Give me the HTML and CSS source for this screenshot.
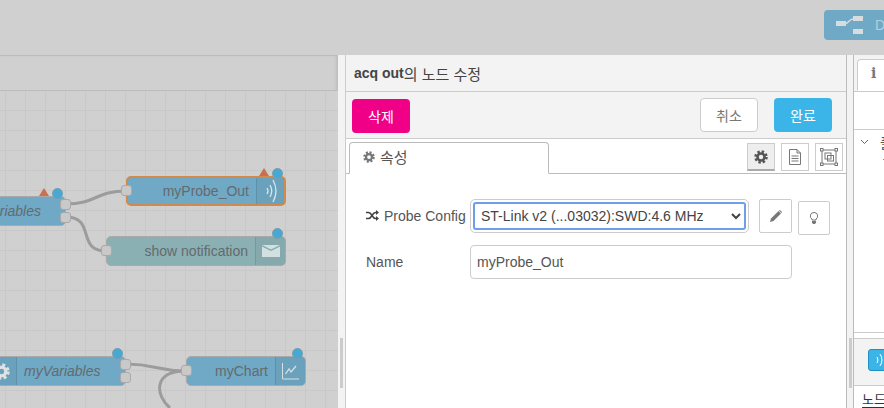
FILE: index.html
```html
<!DOCTYPE html>
<html lang="ko">

<head>
    <meta charset="UTF-8">
    <meta name="viewport" content="width=device-width, initial-scale=1.0">
    <title>acq out</title>
    <link rel="stylesheet" href="styles.css">
</head>

<body>
    <svg class="defs" width="0" height="0">
        <symbol id="cog" viewBox="0 0 16 16">
            <circle cx="8" cy="8" r="6" fill="none" stroke="currentColor" stroke-width="3.4" stroke-dasharray="2.6 2.11"/>
            <circle cx="8" cy="8" r="4" fill="none" stroke="currentColor" stroke-width="3"/>
        </symbol>
    </svg>

    <header class="topbar">
        <div class="deploy">
            <svg class="deploy-icon" width="28" height="18" viewBox="0 0 28 18">
                <path d="M10 7.500C14 7.500 14 3 18 3" fill="none" stroke="#d8dcde" stroke-width="1.500"/>
                <rect x="1" y="5" width="10" height="5" fill="#d8dcde"/>
                <rect x="18" y="0" width="10" height="5" fill="#d8dcde"/>
                <rect x="18" y="13" width="10" height="5" fill="#d8dcde"/>
            </svg>
            <span class="deploy-text">Deploy</span>
        </div>
    </header>

    <div class="main">
        <section class="workspace">
            <div class="ws-tabs"></div>
            <div class="canvas">
                <svg class="wires" width="338" height="318" viewBox="0 91 338 318">
                    <g fill="none" stroke="#9c9c9c" stroke-width="3">
                        <path d="M66 204C96 204 96 191 126 191"/>
                        <path d="M66 217C96 217 76 251 106 251"/>
                        <path d="M126 364C156 364 156 371 186 371"/>
                        <path d="M186 371C153 371 155 395 170 408"/>
                    </g>
                </svg>

                <div class="node node-sel probe-out">
                    <span class="port port-in"></span>
                    <span class="node-label">myProbe_Out</span>
                    <span class="node-icon node-icon-r">
                        <svg width="14" height="24" viewBox="0 0 14 24">
                            <g fill="none" stroke="#dfe3e5" stroke-width="1.300">
                                <path d="M3 9Q5 12 3 15"/>
                                <path d="M6 6Q9.500 12 6 18"/>
                                <path d="M9 1Q15 12 9 23"/>
                            </g>
                        </svg>
                    </span>
                    <span class="warn"></span>
                    <span class="dot"></span>
                </div>

                <div class="node vars-top">
                    <span class="node-label node-italic">myVariables</span>
                    <span class="port port-out port-a"></span>
                    <span class="port port-out port-b"></span>
                    <span class="warn"></span>
                    <span class="dot"></span>
                </div>

                <div class="node node-green notify">
                    <span class="port port-in"></span>
                    <span class="node-label">show notification</span>
                    <span class="node-icon node-icon-r">
                        <svg width="18" height="12" viewBox="0 0 18 12">
                            <path d="M0 0H18L9 4.500Z" fill="#d3e0e1"/>
                            <path d="M0 1.500L9 6L18 1.500V12H0Z" fill="#d3e0e1"/>
                        </svg>
                    </span>
                    <span class="dot"></span>
                </div>

                <div class="node vars-bottom">
                    <span class="node-icon node-icon-l"><svg class="cog-light" width="17" height="17"><use href="#cog"/></svg></span>
                    <span class="node-label node-italic">myVariables</span>
                    <span class="port port-out port-a"></span>
                    <span class="port port-out port-b"></span>
                    <span class="dot"></span>
                </div>

                <div class="node chart">
                    <span class="port port-in"></span>
                    <span class="node-label">myChart</span>
                    <span class="node-icon node-icon-r">
                        <svg width="18" height="17" viewBox="0 0 18 17">
                            <path d="M.5 0V16H17" fill="none" stroke="#d8dfe3"/>
                            <path d="M3.500 11L7 6L9 9L14 3" fill="none" stroke="#d8dfe3" stroke-width="1.300"/>
                        </svg>
                    </span>
                    <span class="dot"></span>
                </div>
            </div>
        </section>

        <div class="splitter"><span class="handle"></span></div>

        <section class="tray">
            <div class="tray-title"><b>acq out</b><span class="title-ko">의 노드 수정</span></div>
            <div class="tray-toolbar">
                <button class="btn btn-delete">삭제</button>
                <div class="tray-actions">
                    <button class="btn btn-cancel">취소</button>
                    <button class="btn btn-done">완료</button>
                </div>
            </div>
            <div class="tray-tabs">
                <div class="tab"><svg class="tab-cog" width="12" height="12"><use href="#cog"/></svg><span class="tab-text">속성</span></div>
                <div class="tab-buttons">
                    <span class="tab-btn tab-btn-on"><svg class="cog-dark" width="14" height="14"><use href="#cog"/></svg></span>
                    <span class="tab-btn">
                        <svg width="14" height="16" viewBox="0 0 14 16">
                            <path d="M1.500 .5H9L12.500 4V15.500H1.500Z" fill="#fff" stroke="#777"/>
                            <path d="M9 .5V4H12.500M3.500 7H10.500M3.500 9.500H10.500M3.500 12H10.500" fill="none" stroke="#777"/>
                        </svg>
                    </span>
                    <span class="tab-btn">
                        <svg width="18" height="18" viewBox="0 0 18 18">
                            <rect x="2" y="2" width="14" height="14" fill="none" stroke="#777"/>
                            <rect x="5" y="5" width="6" height="6" fill="none" stroke="#777"/>
                            <rect x="7.500" y="7.500" width="6" height="5.500" fill="none" stroke="#777"/>
                            <g fill="#fff" stroke="#777">
                                <rect x=".5" y=".5" width="2.500" height="2.500"/>
                                <rect x="15" y=".5" width="2.500" height="2.500"/>
                                <rect x=".5" y="15" width="2.500" height="2.500"/>
                                <rect x="15" y="15" width="2.500" height="2.500"/>
                            </g>
                        </svg>
                    </span>
                </div>
            </div>

            <form class="form">
                <div class="form-row form-row-config">
                    <label class="form-label" for="probe">
                        <svg class="label-icon" width="13" height="11" viewBox="0 0 13 11">
                            <g fill="none" stroke="#444" stroke-width="1.500">
                                <path d="M0 2.500H2.500C6 2.500 6 8.500 9.500 8.500H11"/>
                                <path d="M0 8.500H2.500C6 8.500 6 2.500 9.500 2.500H11"/>
                            </g>
                            <path d="M10 0L13 2.500L10 5ZM10 6L13 8.500L10 11Z" fill="#444"/>
                        </svg>Probe Config</label>
                    <div class="select-box">
                        <select id="probe" class="select">
                            <option>ST-Link v2 (...03032):SWD:4.6 MHz</option>
                        </select>
                    </div>
                    <span class="icon-btn">
                        <svg width="12" height="12" viewBox="0 0 12 12">
                            <path d="M0 12L1 8.500L8.500 1L11 3.500L3.500 11Z" fill="#777"/>
                            <path d="M9 .5L10 0L12 2L11.500 3Z" fill="#777"/>
                        </svg>
                    </span>
                    <span class="icon-btn icon-btn-bulb">
                        <svg width="8" height="12" viewBox="0 0 8 12">
                            <path d="M4 .5A3.500 3.500 0 0 1 6 7V8H2V7A3.500 3.500 0 0 1 4 .5Z" fill="#fff" stroke="#777"/>
                            <path d="M2 9H6V10.500L5 12H3L2 10.500Z" fill="#777"/>
                        </svg>
                    </span>
                </div>
                <div class="form-row">
                    <label class="form-label" for="name">Name</label>
                    <input id="name" class="input" type="text" value="myProbe_Out">
                </div>
            </form>
        </section>

        <div class="splitter splitter-right"><span class="handle handle-right"></span></div>

        <aside class="sidebar">
            <div class="side-tabs"><div class="side-tab">i</div></div>
            <div class="side-head"></div>
            <div class="side-tree">
                <div class="side-row">
                    <svg class="side-arrow" width="9" height="6" viewBox="0 0 9 6"><path d="M1 1L4.500 4.500L8 1" fill="none" stroke="#666"/></svg>
                    <span class="side-text">플로우</span>
                </div>
                <svg class="side-sub" width="9" height="6" viewBox="0 0 9 6"><path d="M1 1L4.500 4.500L8 1" fill="none" stroke="#888"/></svg>
            </div>
            <div class="side-split"></div>
            <div class="side-info">
                <span class="side-node">
                    <svg width="8" height="16" viewBox="0 0 8 16"><g fill="none" stroke="#fff"><path d="M2 5Q4 8 2 11"/><path d="M5 2Q9 8 5 14"/></g></svg>
                </span>
            </div>
            <div class="side-foot"><span class="side-link">노드</span></div>
        </aside>
    </div>
</body>

</html>
```

FILE: styles.css
```css
* {
    box-sizing: border-box;
    font-family: "Liberation Sans", "Noto Sans CJK KR", sans-serif;
}

:root {
    --color-dim: #d0d0d0;
    --color-line: #bcbcbc;
    --color-node: #6fa9c5;
    --color-panel: #f3f3f3;
    --color-border: #ccc;
    --color-text: #555;
}

body {
    margin: 0;
    width: 884px;
    height: 408px;
    overflow: hidden;
    display: flex;
    flex-direction: column;
    background-color: var(--color-dim);
}

.defs {
    position: absolute;
}

.topbar {
    height: 55px;
    flex: none;
    display: flex;
    justify-content: flex-end;
    padding-top: 10px;
    background-color: var(--color-dim);
}

.deploy {
    width: 60px;
    height: 30px;
    display: flex;
    align-items: center;
    gap: 12px;
    padding-left: 11px;
    overflow: hidden;
    white-space: nowrap;
    border-radius: 4px 0 0 4px;
    background-color: var(--color-node);
}

.deploy-icon {
    flex: none;
}

.deploy-text {
    font-size: 14px;
    color: #b4d0de;
}

.main {
    flex: 1;
    display: flex;
    min-height: 0;
}

/* flow canvas */
.workspace {
    width: 338px;
    flex: none;
    display: flex;
    flex-direction: column;
    box-shadow: inset -3px 0 3px -1px #bdbdbd;
    border-top: 1px solid var(--color-line);
}

.ws-tabs {
    height: 35px;
    flex: none;
    border-bottom: 1px solid var(--color-line);
    margin-right: 1px;
}

.canvas {
    flex: 1;
    position: relative;
    overflow: hidden;
    background-color: var(--color-dim);
    background-image:
        linear-gradient(#c8c8c8 1px, transparent 1px),
        linear-gradient(90deg, #c8c8c8 1px, transparent 1px);
    background-size: 20px 20px;
    background-position: 5px -1px;
}

.wires {
    position: absolute;
    left: 0;
    top: 0;
}

.node {
    position: absolute;
    height: 30px;
    display: flex;
    align-items: center;
    justify-content: flex-end;
    border: 1px solid #a9a9a9;
    border-radius: 5px;
    background-color: var(--color-node);
}

.node-sel {
    border: 2px solid #d3894a;
}

.node-sel .node-icon {
    width: 28px;
}

.node-green {
    background-color: #8bb0b3;
}

.node-label {
    font-size: 14px;
    color: #646a6e;
    white-space: nowrap;
    padding: 0 7px;
}

.node-italic {
    font-style: italic;
}

.node-icon {
    width: 30px;
    height: 100%;
    flex: none;
    display: flex;
    align-items: center;
    justify-content: center;
    background-color: rgba(0, 0, 0, .04);
}

.node-icon-r {
    border-left: 1px solid rgba(0, 0, 0, .1);
}

.node-icon-l {
    border-right: 1px solid rgba(0, 0, 0, .1);
}

.cog-light {
    color: #dfe3e5;
}

.port {
    position: absolute;
    width: 11px;
    height: 11px;
    border: 1px solid #a9a9a9;
    border-radius: 3px;
    background-color: #c9c9c9;
}

.port-in {
    left: -6px;
    top: 8px;
}

.port-out {
    right: -6px;
}

.port-a {
    top: 2px;
}

.port-b {
    top: 15px;
}

.dot {
    position: absolute;
    right: 2px;
    top: -9px;
    width: 11px;
    height: 11px;
    border: 1px solid #7c9cab;
    border-radius: 50%;
    background-color: #46a9d3;
}

.warn {
    position: absolute;
    right: 16px;
    top: -9px;
    width: 0;
    height: 0;
    border-left: 5px solid transparent;
    border-right: 5px solid transparent;
    border-bottom: 8px solid #c9704e;
}

.probe-out {
    left: 126px;
    top: 85px;
    width: 160px;
}

.probe-out .port-in {
    left: -7px;
    top: 7px;
}

.probe-out .dot {
    top: -10px;
    right: 1px;
}

.probe-out .warn {
    top: -10px;
    right: 15px;
}

.vars-top {
    left: -60px;
    top: 105px;
    width: 126px;
}

.vars-top .node-label {
    padding-right: 24px;
}

.notify {
    left: 106px;
    top: 145px;
    width: 180px;
}

.vars-bottom {
    left: -14px;
    top: 265px;
    width: 140px;
    justify-content: flex-start;
}

.chart {
    left: 186px;
    top: 265px;
    width: 120px;
}

/* dividers between panels */
.splitter {
    width: 8px;
    flex: none;
    position: relative;
    background-color: var(--color-panel);
    border-right: 1px solid var(--color-border);
}

.splitter-right {
    border-left: 1px solid #bbb;
    border-right: 1px solid #bbb;
}

.handle {
    position: absolute;
    left: 2px;
    bottom: 20px;
    width: 3px;
    height: 50px;
    background-color: var(--color-border);
}

/* edit tray */
.tray {
    width: 500px;
    flex: none;
    display: flex;
    flex-direction: column;
    background-color: #fff;
}

.tray-title {
    height: 37px;
    flex: none;
    display: flex;
    align-items: center;
    padding-left: 8px;
    font-size: 14px;
    color: #444;
    background-color: var(--color-panel);
    border-bottom: 1px solid var(--color-border);
}

.title-ko {
    font-size: 15px;
}

.tray-toolbar {
    height: 47px;
    flex: none;
    display: flex;
    justify-content: space-between;
    padding: 6px 14px 0 6px;
    background-color: var(--color-panel);
    border-bottom: 1px solid var(--color-border);
}

.tray-actions {
    display: flex;
    gap: 16px;
}

.btn {
    width: 58px;
    height: 34px;
    padding: 0;
    font-size: 14px;
    border-radius: 4px;
    border: 1px solid transparent;
}

.btn-delete {
    margin-top: 1px;
    color: #fff;
    background-color: #ef0087;
}

.btn-cancel {
    color: #777;
    background-color: #fff;
    border-color: var(--color-border);
}

.btn-done {
    color: #fff;
    background-color: #3bb5e8;
}

.tray-tabs {
    height: 35px;
    flex: none;
    display: flex;
    justify-content: space-between;
    padding: 3px 3px 0;
    border-bottom: 1px solid #bbb;
}

.tab {
    width: 200px;
    height: 32px;
    display: flex;
    align-items: center;
    gap: 5px;
    padding: 0 0 3px 13px;
    color: #555;
    background-color: #fff;
    border: 1px solid #bbb;
    border-bottom-color: #fff;
    border-radius: 4px 4px 0 0;
}

.tab-text {
    font-size: 15px;
}

.tab-cog {
    color: #777;
}

.tab-buttons {
    display: flex;
    gap: 6px;
    padding-top: 1px;
}

.tab-btn {
    width: 28px;
    height: 28px;
    display: flex;
    align-items: center;
    justify-content: center;
    background-color: #fff;
    border: 1px solid var(--color-border);
}

.tab-btn-on {
    background-color: #eee;
    border-bottom: 2px solid #aaa;
}

.cog-dark {
    color: #555;
}

.form {
    flex: 1;
    padding: 25px 0 0 20px;
}

.form-row {
    display: flex;
    align-items: center;
    margin-bottom: 12px;
}

.form-row-config {
    height: 34px;
}

.form-label {
    width: 104px;
    flex: none;
    font-size: 14px;
    color: #555;
    white-space: nowrap;
}

.label-icon {
    margin-right: 5px;
}

.select-box {
    width: 279px;
    height: 34px;
    flex: none;
    padding: 2px;
    border: 1px solid var(--color-border);
    border-radius: 5px;
}

.select {
    width: 100%;
    height: 100%;
    padding: 0 2px;
    font-size: 14px;
    color: #444;
    background-color: #fff;
    border: 2px solid #6ea0e8;
    border-radius: 3px;
    outline: none;
}

.icon-btn {
    width: 33px;
    height: 34px;
    flex: none;
    display: flex;
    align-items: center;
    justify-content: center;
    margin-left: 10px;
    border: 1px solid var(--color-border);
    border-radius: 2px;
}

.icon-btn-bulb {
    width: 32px;
    margin-left: 6px;
    margin-top: 3px;
}

.input {
    width: 322px;
    height: 34px;
    padding: 0 6px;
    font-size: 14px;
    color: #555;
    border: 1px solid var(--color-border);
    border-radius: 4px;
    outline: none;
}

/* right sidebar, cut off by the window */
.sidebar {
    flex: 1;
    min-width: 0;
    display: flex;
    flex-direction: column;
    overflow: hidden;
    background-color: #fff;
}

.side-tabs {
    height: 37px;
    flex: none;
    padding: 4px 0 0 3px;
    background-color: var(--color-panel);
    border-bottom: 1px solid var(--color-border);
}

.side-tab {
    width: 60px;
    height: 32px;
    padding: 5px 0 0 13px;
    font-family: "DejaVu Serif", serif;
    font-size: 14px;
    font-weight: bold;
    color: #777;
    background-color: #fff;
    border: 1px solid var(--color-border);
    border-bottom-color: #fff;
    border-radius: 4px 0 0 0;
}

.side-head {
    height: 38px;
    flex: none;
    border-bottom: 1px solid var(--color-border);
}

.side-tree {
    height: 202px;
    flex: none;
    padding: 2px 0 0 6px;
}

.side-row {
    display: flex;
    align-items: center;
    gap: 11px;
    white-space: nowrap;
    font-size: 14px;
    color: #555;
}

.side-arrow {
    flex: none;
}

.side-sub {
    display: block;
    margin: 6px 0 0 22px;
}

.side-split {
    height: 7px;
    flex: none;
    border-top: 1px solid var(--color-border);
    border-bottom: 1px solid var(--color-border);
}

.side-info {
    height: 47px;
    flex: none;
    padding: 10px 0 0 14px;
    background-color: var(--color-panel);
    border-bottom: 1px solid var(--color-border);
}

.side-node {
    display: flex;
    align-items: center;
    width: 40px;
    height: 22px;
    padding-left: 6px;
    border: 1px solid #1f8ec2;
    border-radius: 3px;
    background-color: #3bb5e8;
}

.side-foot {
    flex: 1;
    padding: 3px 0 0 8px;
    white-space: nowrap;
}

.side-link {
    font-size: 13px;
    color: #333;
    border-bottom: 1px solid #333;
}
```
